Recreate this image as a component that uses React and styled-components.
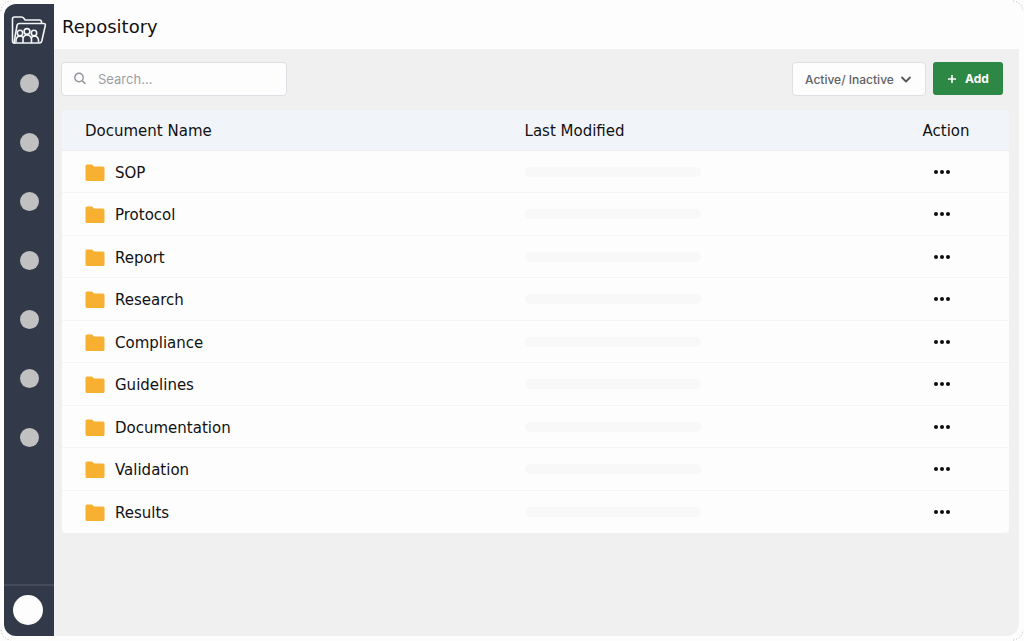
import React from "react";
import styled, { createGlobalStyle } from "styled-components";

const GlobalStyle = createGlobalStyle`
  * { box-sizing: border-box; }
  body { margin: 0; background: #fdfdfd; color: #111; font-family: "DejaVu Sans", sans-serif; }
  button, input, select { font-family: Inter, "Liberation Sans", sans-serif; font-size: 12px; margin: 0; }
`;

const Shell = styled.div`
  position: relative;
  display: flex;
  min-height: 100vh;
  padding: 4px 5px 5px 4px;
`;

const Corner = styled.svg`
  position: absolute;
  pointer-events: none;
  top: ${(p) => (p.$bottom ? "auto" : 0)};
  bottom: ${(p) => (p.$bottom ? 0 : "auto")};
  left: ${(p) => (p.$right ? "auto" : 0)};
  right: ${(p) => (p.$right ? 0 : "auto")};
`;

const Sidebar = styled.nav`
  display: flex;
  flex-direction: column;
  flex: none;
  width: 50px;
  background: #323949;
  border-radius: 12px 0 0 12px;
`;

const Brand = styled.a`
  display: flex;
  justify-content: center;
  padding-top: 11px;
  height: 70px;
`;

const NavList = styled.div`
  display: flex;
  flex-direction: column;
  align-items: center;
  gap: 40px;
`;

const NavDot = styled.button`
  width: 19px;
  height: 19px;
  padding: 0;
  border: 0;
  border-radius: 50%;
  background: #c1c1c1;
`;

const Account = styled.div`
  display: flex;
  justify-content: center;
  height: 52px;
  margin-top: auto;
  padding: 9px 2px 0 0;
  border-top: 2px solid #454b59;
`;

const Avatar = styled.button`
  width: 30px;
  height: 30px;
  padding: 0;
  border: 0;
  border-radius: 50%;
  background: #fdfdfd;
`;

const Main = styled.main`
  flex: 1;
  min-width: 0;
  background: #f0f0f0;
  border-radius: 0 0 12px 0;
`;

const Header = styled.header`
  display: flex;
  align-items: center;
  height: 45px;
  padding-left: 8px;
  background: #fdfdfd;
`;

const Title = styled.h1`
  margin: 0;
  font-size: 18px;
  line-height: 24px;
  font-weight: 400;
`;

const Toolbar = styled.div`
  display: flex;
  gap: 7px;
  padding: 13px 16px 14px 7px;
`;

const Field = styled.label`
  display: flex;
  align-items: center;
  gap: 12px;
  width: 226px;
  height: 34px;
  margin-right: auto;
  padding: 0 12px;
  background: #fdfdfd;
  border: 1px solid #dcdfe3;
  border-radius: 4px;
`;

const SearchInput = styled.input`
  flex: 1;
  min-width: 0;
  padding: 0;
  border: 0;
  outline: 0;
  background: transparent;
  font-size: 13px;
  &::placeholder { color: #9a9da5; opacity: 1; }
`;

const Filter = styled.div`
  position: relative;
  width: 134px;
  height: 34px;
  svg { position: absolute; right: 14px; top: 13px; pointer-events: none; }
`;

const FilterSelect = styled.select`
  appearance: none;
  width: 100%;
  height: 34px;
  padding: 0 12px;
  color: #606266;
  background: #fdfdfd;
  border: 1px solid #dcdfe3;
  border-radius: 4px;
  font-weight: 500;
`;

const AddButton = styled.button`
  display: flex;
  align-items: center;
  justify-content: center;
  gap: 8px;
  width: 70px;
  height: 33px;
  padding: 0;
  border: 0;
  border-radius: 3px;
  color: #fdfdfd;
  background: #2d8745;
  font-weight: 700;
`;

const Card = styled.div`
  margin: 0 10px 0 8px;
  overflow: hidden;
  background: #fdfdfd;
  border-radius: 4px;
`;

const Table = styled.table`
  width: 100%;
  border-collapse: separate;
  border-spacing: 0;
  table-layout: fixed;
  font-size: 15px;
  line-height: 20px;
`;

const HeadCell = styled.th`
  height: 41px;
  padding: 2px 0 0 ${(p) => p.$indent || 0}px;
  width: ${(p) => p.$width};
  font-weight: 400;
  text-align: ${(p) => p.$align || "left"};
  background: #f1f5f9;
  border-bottom: 1px solid #eeeff1;
`;

const Row = styled.tr`
  height: 42px;
  &:nth-child(even) { height: 43px; }
  &:not(:last-child) td { border-bottom: 1px solid #f5f5f5; }
`;

const Cell = styled.td`
  padding: 0 0 0 ${(p) => p.$indent || 0}px;
  text-align: ${(p) => p.$align || "left"};
`;

const Name = styled.div`
  display: flex;
  align-items: center;
  gap: 10px;
  padding-top: 2px;
`;

const Placeholder = styled.div`
  width: 176px;
  height: 10px;
  border-radius: 5px;
  background: #f8f8f8;
`;

const MoreButton = styled.button`
  display: inline-flex;
  align-items: center;
  justify-content: center;
  width: 24px;
  height: 20px;
  margin-right: 8px;
  padding: 0;
  border: 0;
  background: transparent;
  vertical-align: middle;
`;

const documents = ["SOP", "Protocol", "Report", "Research", "Compliance", "Guidelines", "Documentation", "Validation", "Results"];
const sections = ["Home", "Documents", "Teams", "Tasks", "Reports", "Training", "Settings"];

const BrandIcon = () => (
  <svg width="36" height="30" viewBox="0 0 36 30" fill="none" stroke="#f4f5f7" strokeWidth="1.6" strokeLinejoin="round" strokeLinecap="round">
    <path d="M4 28H3Q1.500 28 1.500 26V4Q1.500 2 3.500 2H10.500Q12 2 13 3.500L14 5H28.500Q30.500 5 30.500 7V8" />
    <path d="M3 28L6 10.500Q6.300 8.500 8.500 8.500H32.500Q34.800 8.500 34.300 10.500L30.800 26Q30.300 28 28.500 28Z" />
    <circle cx="9" cy="18" r="2.700" />
    <circle cx="16" cy="16.500" r="2.900" />
    <circle cx="23" cy="18" r="2.700" />
    <path d="M5 27V25Q5.500 21.300 9 21Q11.500 21 12 23M12 27.500V24Q12.500 20 16 20T20.500 24V27.500M20.500 23Q21 21 23.500 21Q27 21.300 27.500 25V27" />
  </svg>
);

const FolderIcon = () => (
  <svg width="20" height="18" viewBox="0 0 20 18" fill="#f7b031" aria-hidden="true">
    <path d="M2 .5H6.500Q7.200 .5 7.700 1L9 2.500H18Q19.500 2.500 19.500 4V15.500Q19.500 17 18 17H2Q.5 17 .5 15.500V2Q.5 .5 2 .5Z" />
  </svg>
);

const cornerPaths = [
  { d: "M1 11Q2 2 11 1" },
  { d: "M5 1Q14 2 15 11", $right: true },
  { d: "M1 5Q2 14 11 15", $bottom: true },
  { d: "M5 15Q14 14 15 5", $right: true, $bottom: true },
];

export default function App() {
  return (
    <>
      <GlobalStyle />
      <Shell>
        {cornerPaths.map(({ d, $right, $bottom }) => (
          <Corner key={d} $right={$right} $bottom={$bottom} width="16" height="16" viewBox="0 0 16 16" fill="none" stroke="#b5b5b5" strokeDasharray="1 2" aria-hidden="true">
            <path d={d} />
          </Corner>
        ))}
        <Sidebar aria-label="Main">
          <Brand href="#" aria-label="Home"><BrandIcon /></Brand>
          <NavList>
            {sections.map((s) => <NavDot key={s} type="button" aria-label={s} />)}
          </NavList>
          <Account><Avatar type="button" aria-label="Account" /></Account>
        </Sidebar>
        <Main>
          <Header><Title>Repository</Title></Header>
          <Toolbar>
            <Field>
              <svg width="12" height="14" viewBox="0 0 12 14" fill="none" stroke="#8f929a" strokeWidth="1.4" strokeLinecap="round" aria-hidden="true">
                <circle cx="5" cy="5.500" r="4.200" />
                <path d="M8.300 8.800L11 11.500" />
              </svg>
              <SearchInput type="search" placeholder="Search..." aria-label="Search" />
            </Field>
            <Filter>
              <FilterSelect aria-label="Status"><option>Active/ Inactive</option></FilterSelect>
              <svg width="12" height="10" viewBox="0 0 12 10" fill="none" stroke="#55575c" strokeWidth="1.800" strokeLinecap="round" strokeLinejoin="round" aria-hidden="true">
                <path d="M2 2.500L6 6.500L10 2.500" />
              </svg>
            </Filter>
            <AddButton type="button">
              <svg width="10" height="10" viewBox="0 0 10 10" stroke="#fdfdfd" strokeWidth="1.600" aria-hidden="true">
                <path d="M5 1V9M1 5H9" />
              </svg>
              Add
            </AddButton>
          </Toolbar>
          <Card>
            <Table>
              <thead>
                <tr>
                  <HeadCell scope="col" $width="48%" $indent={23}>Document Name</HeadCell>
                  <HeadCell scope="col" $indent={8}>Last Modified</HeadCell>
                  <HeadCell scope="col" $width="126px" $align="center">Action</HeadCell>
                </tr>
              </thead>
              <tbody>
                {documents.map((name) => (
                  <Row key={name}>
                    <Cell $indent={23}><Name><FolderIcon />{name}</Name></Cell>
                    <Cell $indent={8}><Placeholder /></Cell>
                    <Cell $align="center">
                      <MoreButton type="button" aria-label={`Actions for ${name}`}>
                        <svg width="16" height="4" viewBox="0 0 16 4" fill="#0c0c0c" aria-hidden="true">
                          <circle cx="2" cy="2" r="2" />
                          <circle cx="8" cy="2" r="2" />
                          <circle cx="14" cy="2" r="2" />
                        </svg>
                      </MoreButton>
                    </Cell>
                  </Row>
                ))}
              </tbody>
            </Table>
          </Card>
        </Main>
      </Shell>
    </>
  );
}
